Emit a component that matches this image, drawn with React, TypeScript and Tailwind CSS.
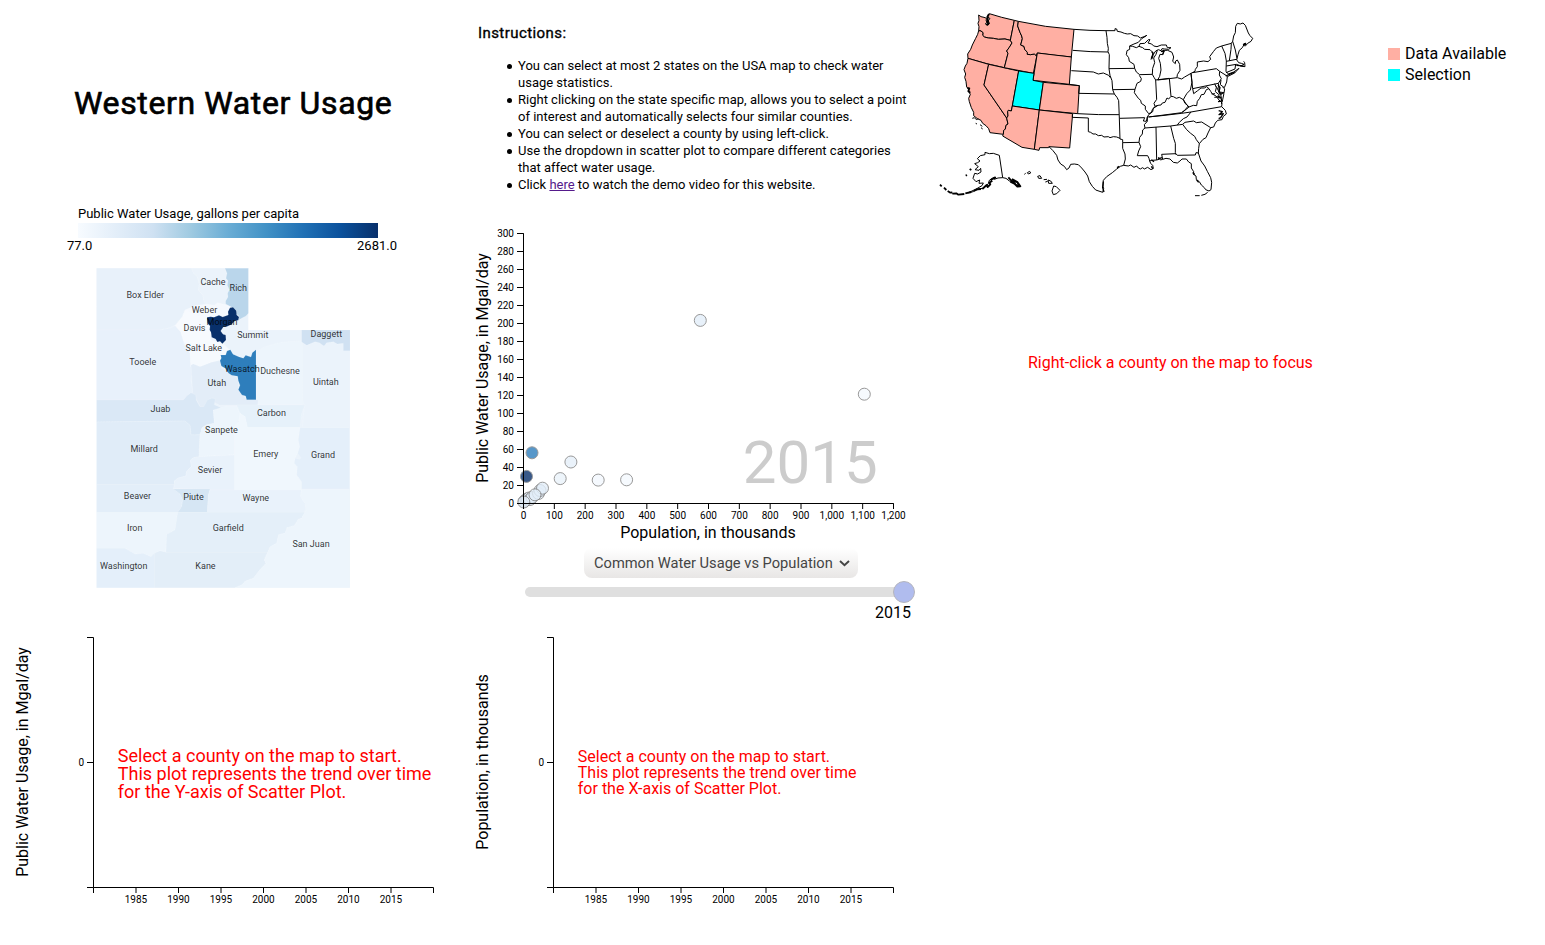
import React from "react";

type County = { name: string; fill: string; d: string };
type Label = { text: string; x: number; y: number };

const WEST_FILL = "#ffafa3";

const westernStates: { name: string; fill: string; d: string }[] = [
  { name: "WA", fill: WEST_FILL, d: "M146 45 153 50 162 52 170 55 168 62 172 66 166 72 174 76 178 70 174 62 180 56 173 50 178 41 Q215 53 253 61L241 121 225 117 205 118 190 115 175 114 163 111 158 106 159 98 153 93 146 92 147 80 144 70 147 62Z" },
  { name: "OR", fill: WEST_FILL, d: "M146 92 153 93 159 98 158 106 163 111 175 114 190 115 205 118 225 117 241 121 246 129 238 142 230 153 234 160 223 203Q165 191 114 175L113 162 122 148 127 135 137 115 143 103Z" },
  { name: "CA", fill: WEST_FILL, d: "M114 175 176 193 162 255 230 354 234 372 228 376 226 387 221 392 220 403 180 398 176 386 168 377 158 370 153 361 142 356 131 347 131 337 124 323 118 305 116 295 121 283 117 276 115 266 110 261 108 244 104 232 107 222 102 209 106 198 111 190Z" },
  { name: "NV", fill: WEST_FILL, d: "M176 193 266 213 247 318 244 333 235 331 233 335 234 348 230 354 162 255Z" },
  { name: "ID", fill: WEST_FILL, d: "M253 61 265 64 263 78 270 97 275 108 277 116 272 135 282 139 284 148 292 157 292 163 302 164 313 162 319 167 322 160 310 220 223 203 234 160 230 153 238 142 246 129 241 121Z" },
  { name: "MT", fill: WEST_FILL, d: "M265 64Q345 82 432 88L424 171Q370 166 322 159L319 167 313 162 302 164 292 163 292 157 284 148 282 139 272 135 277 116 275 108 270 97 263 78Z" },
  { name: "WY", fill: WEST_FILL, d: "M322 159 424 171 418 253 309 241Z" },
  { name: "UT", fill: "#00ffff", d: "M266 213 312 220 309 241 340 247 328 330 247 318Z" },
  { name: "CO", fill: WEST_FILL, d: "M340 247 448 257 443 341 328 330Z" },
  { name: "AZ", fill: WEST_FILL, d: "M247 318 328 330 313 448 276 442 218 408 220 403 221 392 226 387 228 376 234 372 230 354 234 348 233 335 235 331 244 333Z" },
  { name: "NM", fill: WEST_FILL, d: "M328 330 428 341 419 444 357 440 356 443 329 443 327 451 313 448Z" },
];

const plainWest: string[] = [
  "M432 88 Q480 92 528 92",
  "M428 151 Q480 156 534 156",
  "M424 212 490 216 505 222 520 219 536 226 541 233",
  "M418 253 448 257 446 280 553 282",
  "M443 341 Q505 345 567 344",
  "M427 343 427 352 475 354 475 395 482 397 489 402 497 402 505 407 515 406 522 411 535 410 540 413 550 410 560 411 570 415",
  "M357 440 369 452 380 466 384 480 392 492 403 499 410 509 417 504 422 493 433 492 445 494 455 504 465 516 473 528 478 545 487 559 497 570 518 577 521 566 519 559 520 541 530 530 547 518 559 508 571 499 581 496",
  "M145 500 134 491 143 488 150 483 142 476 151 467 165 464 165 457 178 461 190 460 208 466 218 533 228 535 238 543 249 545 259 553 267 560",
  "M145 500 135 509 147 511 152 505 153 516 143 522 134 520 129 535 138 545 149 540 147 550 160 549 156 557 142 565 126 573 115 578",
  "M115 578 130 575 141 567 160 565 175 551 178 541 188 534 195 531 193 538 204 534 218 533",
  "M127 355 133 353 139 359 145 356 M137 370 141 372 M150 374 157 379 M153 383 158 387",
  "M283 523 287 520 M292 518 299 514 302 519 295 522Z",
  "M323 529 330 527 335 535 326 535Z M341 539 351 538 M346 546 353 544 M354 540 362 543 367 550 356 550Z",
  "M371 558 379 560 390 571 380 581 370 584 366 573Z",
];

const heavyCoast: string[] = [
  "M235 532 245 543 262 546 271 559 262 560 253 551 241 545 M246 537 262 546 268 559 259 556",
  "M174 55 171 65 176 70 169 75M177 42 172 51 175 67",
  "M112 264 118 265 115 274 121 278",
  "M157 567 170 555 173 561 181 553 178 548 187 542 M181 540 198 532",
  "M30 554 35 559 M42 563 49 570 M53 573 61 578 67 577 M67 581 79 580 85 584 103 582 M106 580 124 576",
  "M107 527 111 525 M119 507 124 510 M131 573 142 568 153 567",
];

const eastStates: string[] = [
  "M48 92 75 92 75 86 80 87 82 94 93 96 103 100 112 102 122 101 132 107 143 108 151 114 162 110 171 106",
  "M48 92 51 112 52 130 55 145 54 155 58 164 57 206",
  "M57 206 134 205",
  "M168 108 155 116 145 127 132 132 119 138 M119 138 119 148 111 152 109 164 116 173 118 184 132 193 134 205",
  "M119 138 128 139 139 143 147 139 158 143 164 148 180 149 185 154 189 159 186 169 183 179 M147 139 150 131 164 130 175 119 180 119 174 129 185 132 191 138 201 140 214 135 229 135 232 143 243 143 236 148 224 147 216 146 213 152 205 149 197 153 189 165 184 173",
  "M134 205 139 216 149 224 187 223 188 205 194 188 191 174 198 163 202 151",
  "M57 206 60 226 66 242 68 269 135 268 138 259 141 250 152 244 154 236 148 226",
  "M68 269 73 282 81 292 86 302 88 355 164 353 160 363 169 364 172 351 177 343",
  "M135 268 133 278 145 295 152 301 154 310 166 318 166 328 176 341 184 338 187 329 195 319 192 310 200 298 197 240 192 232 187 223",
  "M197 240 238 235 243 289 236 297 231 294 225 307 217 309 213 315 204 316 195 319",
  "M203 240 209 229 213 210 211 190 206 175 210 163 218 164 224 151 233 151 246 157 251 171 248 184 256 191 257 183 262 180 269 193 270 211 262 224 261 233 238 236Z",
  "M262 233 275 237 284 231 303 220 306 247 301 270 291 280 286 288 280 299 268 292 259 295 250 290 243 289",
  "M280 299 285 310 295 318 283 332 275 338 177 351 M177 343 188 335 190 325 204 316",
  "M88 355 90 417 98 419 98 428 147 427 149 412 157 402 158 390 165 384 163 374 172 364 172 351",
  "M98 428 98 445 105 462 106 477 101 496 115 498 122 495 132 502 140 498 145 504 151 507 158 503 163 507 173 502 183 509 190 505 188 496 182 490 179 483 177 475 173 467 142 467 146 453 152 440 147 427",
  "M179 483 185 481 200 480 198 381",
  "M165 384 242 378 278 373",
  "M242 378 251 415 256 430 256 458 258 464 M200 480 207 478 206 472 211 480 218 478 215 463 258 461 262 466 316 465 318 458 325 459",
  "M218 478 228 475 240 477 250 487 262 489 270 483 276 477 289 477 296 486 304 491 304 504 311 515 309 522 318 528 319 539 328 545 334 555 343 563 347 569 357 573 363 569 365 547 362 533 352 514 344 498 333 483 325 459",
  "M315 587 329 587 M334 586 345 583 353 577",
  "M278 373 290 389 302 400 314 409 319 419 328 431 326 445 325 459",
  "M328 431 339 418 348 413 354 399 362 383 371 381 376 369 383 361 396 359 400 349 409 342 406 331 395 320",
  "M278 373 285 367 311 363 319 368 335 366 362 383",
  "M262 375 268 367 280 356 291 351 303 336 M172 351 215 347 275 340 303 336 395 320",
  "M303 220 308 266 385 250 M303 220 315 214 316 208",
  "M308 218 379 206 389 214 388 225 394 236 385 250",
  "M316 208 322 200 322 186 341 183 354 185 362 178 359 170 370 155 379 144 395 138 405 160 409 183 408 214 415 222 431 216 447 205 434 219 412 230 408 226 389 214",
  "M395 138 424 130 423 148 418 182 M409 184 439 178 446 188 454 190 462 193 452 198 439 193 409 198 M437 193 435 207 408 218",
  "M424 130 428 124 436 150 441 176 440 180",
  "M428 124 431 108 436 98 437 79 442 70 451 72 459 69 466 76 475 99 480 107 488 115 483 124 473 130 468 136 464 130 457 143 448 151 444 164 441 176",
  "M452 198 465 200 464 188 461 184",
  "M412 230 410 246 403 263 391 254 393 240",
  "M308 266 311 281 323 272 333 264 343 264 350 260 357 266 362 274",
  "M280 299 290 314 297 321 310 316 320 317 322 304 329 295 334 284 342 283 349 269 357 266",
  "M275 338 290 327 297 321",
  "M362 274 367 282 378 288 387 300 396 309 395 320",
  "M374 251 379 263 376 275 387 284 386 294 394 293 392 283 402 279 404 267 398 261 M385 250 388 276 402 278 M379 259 385 272 391 285 M402 280 398 299 394 312 M365 282 375 281M373 292 389 291",
];

const eastHeavy: string[] = [
  "M384 255 390 263 387 275 395 283 M382 288 392 292 396 303 384 305",
  "M407 228 425 220 434 217 M439 196 451 197 462 199 M386 332 397 335 387 344 400 341 392 353 386 356",
  "M184 479 192 485 M205 477 216 473 M184 499 189 507 M309 516 314 524 M320 540 326 547 M40 545 38 563 42 576 M81 503 88 499",
  "M459 134 467 130 464 139 M185 155 189 159 188 169 185 177 M213 155 222 151 218 164",
];

const counties: County[] = [
  { name: "State", fill: "#ebf3fb", d: "M110 205H565V390H870V1163H110Z" },
  { name: "Box Elder", fill: "#e8f1fa", d: "M110 205H395L401 220 412 230 418 253 415 270 429 286 431 300 440 312 437 320 405 317 385 327 375 330 367 350 345 377 330 384 300 390H110Z" },
  { name: "Cache", fill: "#ebf3fb", d: "M395 205H497L503 240 508 280 497 312 470 322 437 315 431 300 429 286 415 270 418 253 412 230 401 220Z" },
  { name: "Rich", fill: "#bad6eb", d: "M495 205H565V340L558 348 546 354 537 359 537 348 528 341 530 332 515 322 497 312 497 303 504 291 503 280 508 269 502 256 504 242 498 235 501 220Z" },
  { name: "Weber", fill: "#f5f9fe", d: "M375 330 405 317 440 312 462 316 473 308 500 315 515 322 508 345 480 352 440 355 410 345Z" },
  { name: "Davis", fill: "#f7fafe", d: "M345 377 367 350 375 330 410 345 440 355 442 370 450 378 453 400 450 425 400 430 372 428Z" },
  { name: "Tooele", fill: "#e8f1fb", d: "M110 390H300L330 384 345 377 362 396 372 430 390 460 393 490 397 515 393 540 398 577 380 588 370 600H110Z" },
  { name: "Salt Lake", fill: "#f6fafe", d: "M372 430 400 430 450 420 478 425 490 431 507 448 500 462 485 470 480 484 455 487 420 500 400 492 392 500 390 460Z" },
  { name: "Uintah", fill: "#ebf3fb", d: "M725 420H870V683H727L733 615 727 600Z" },
  { name: "Duchesne", fill: "#edf5fc", d: "M588 455 615 440 665 427 727 422V615H588Z" },
  { name: "Daggett", fill: "#d0e1f2", d: "M725 390H870V452L850 452 850 430 832 432 820 425 800 428 792 438 778 428 765 425 740 436 725 426Z" },
  { name: "Utah", fill: "#e3edf8", d: "M393 495 400 492 420 500 455 487 480 481 484 505 520 525 535 535 535 570 560 598 595 600 593 615 478 615 465 608 458 594 445 600 435 620 420 620 405 590 393 583 398 577Z" },
  { name: "Juab", fill: "#dae8f6", d: "M110 600H370L380 588 393 578 407 585 409 601 420 620 431 620 442 600 456 594 466 597 463 614 483 623 470 632 460 630 463 670 440 674 426 683 420 704 393 705 390 676 375 663 110 666Z" },
  { name: "Millard", fill: "#e0ecf8", d: "M110 666 375 663 390 676 393 705 420 704 417 770 400 773 391 781 394 799 380 814 378 828 355 834 344 842 343 853H110Z" },
  { name: "Sanpete", fill: "#edf5fc", d: "M463 670 460 630 483 623 500 618 530 618 538 635 540 655 525 680 523 765 417 770 420 704 426 683 440 674Z" },
  { name: "Carbon", fill: "#e6f1fa", d: "M530 615H735L725 640 720 682H562L555 650 540 640Z" },
  { name: "Emery", fill: "#f0f7fd", d: "M540 640 555 650 562 682H720L715 720 720 745 705 775 703 790 712 800 710 825 725 845 725 870H523L523 680 537 665Z" },
  { name: "Grand", fill: "#e4effa", d: "M720 683H868V867H725L725 845 710 825 712 800 703 790 705 775 720 778 722 772 713 760 719 740 715 720Z" },
  { name: "Sevier", fill: "#e9f2fb", d: "M417 770 523 765 523 870H450L340 865 343 853 344 842 355 834 378 828 380 814 394 799 391 781 400 773Z" },
  { name: "Beaver", fill: "#e3eef9", d: "M110 853H343L340 866 360 882 368 900 365 920 353 937H110Z" },
  { name: "Piute", fill: "#d6e6f4", d: "M340 867H450L445 885 442 937H353L365 920 368 900 360 882Z" },
  { name: "Wayne", fill: "#e9f2fb", d: "M450 870H725L722 890 735 910 738 925 730 938H442L445 885Z" },
  { name: "Iron", fill: "#edf5fc", d: "M110 937H353L348 985 345 990 320 1003 318 1055 300 1052 273 1070 250 1060 225 1062 195 1045H110Z" },
  { name: "Garfield", fill: "#e4eff9", d: "M353 937H735L725 955 715 958 703 977 681 983 675 1000 656 1004 650 1030 630 1041 623 1057H318L320 1003 345 990Z" },
  { name: "Washington", fill: "#e4effa", d: "M110 1045H195L225 1062 250 1060 273 1070 283 1060V1163H110Z" },
  { name: "Kane", fill: "#e3eef8", d: "M283 1060 300 1052 318 1057H623L613 1080 618 1090 595 1115 580 1135 555 1144 547 1154 525 1163H283Z" },
  { name: "San Juan", fill: "#edf5fc", d: "M725 867H868V1163H525L547 1154 555 1144 580 1135 595 1115 618 1090 613 1080 623 1057 630 1041 650 1030 656 1004 675 1000 681 983 703 977 715 958 725 955 738 930 735 910 722 890Z" },
  { name: "Morgan", fill: "#08306b", d: "M441 352 452 350 462 352 477 346 488 351 505 345 504 335 510 323 519 322 529 332 530 345 537 351 535 361 525 362 515 373 503 379 490 381 482 393 489 403 497 405 498 420 487 431 480 424 472 426 467 417 455 412 453 397 449 390 450 378 443 370Z" },
  { name: "Wasatch", fill: "#2e7ebc", d: "M480 482 484 474 482 465 497 465 501 453 511 449 519 463 536 470 550 475 557 466 573 471 577 458 588 449V599H560L557 588 546 585 535 569 540 556 535 542 533 529 515 526 505 519 498 506 484 498Z" },
];

const countyLabels: Label[] = [
  { text: "Cache", x: 213, y: 285 }, { text: "Rich", x: 238.3, y: 291 }, { text: "Box Elder", x: 145.3, y: 298 },
  { text: "Weber", x: 204.5, y: 313 }, { text: "Morgan", x: 222, y: 325 }, { text: "Davis", x: 194.5, y: 331 },
  { text: "Summit", x: 252.8, y: 338 }, { text: "Daggett", x: 326.3, y: 337 }, { text: "Salt Lake", x: 203.8, y: 351 },
  { text: "Tooele", x: 142.8, y: 365 }, { text: "Wasatch", x: 242.2, y: 372 }, { text: "Duchesne", x: 280, y: 374 },
  { text: "Utah", x: 216.8, y: 386 }, { text: "Uintah", x: 325.8, y: 385 }, { text: "Juab", x: 160.5, y: 412 },
  { text: "Carbon", x: 271.5, y: 416 }, { text: "Sanpete", x: 221.5, y: 433 }, { text: "Millard", x: 144.2, y: 452 },
  { text: "Emery", x: 265.8, y: 457 }, { text: "Grand", x: 323, y: 458 }, { text: "Sevier", x: 210, y: 473 },
  { text: "Beaver", x: 137.5, y: 499 }, { text: "Piute", x: 193.5, y: 500 }, { text: "Wayne", x: 255.8, y: 501 },
  { text: "Iron", x: 134.7, y: 531 }, { text: "Garfield", x: 228.3, y: 531 }, { text: "San Juan", x: 311, y: 547 },
  { text: "Washington", x: 123.7, y: 569 }, { text: "Kane", x: 205.5, y: 569 },
];

const dots: { x: number; y: number; fill: string }[] = [
  { x: 700.3, y: 320.4, fill: "#e3eef9" },
  { x: 864.3, y: 394.2, fill: "#f5f9fe" },
  { x: 532, y: 452.8, fill: "#2e7ebc" },
  { x: 526.5, y: 476.4, fill: "#08306b" },
  { x: 570.9, y: 462, fill: "#e6f0fa" },
  { x: 560.2, y: 478.6, fill: "#ebf3fb" },
  { x: 598.2, y: 480.1, fill: "#f3f8fe" },
  { x: 626.6, y: 479.8, fill: "#f5f9fe" },
  { x: 524.5, y: 501, fill: "#e3eef9" }, { x: 526, y: 500, fill: "#e3eef9" },
  { x: 527, y: 499, fill: "#dae8f6" }, { x: 529, y: 498, fill: "#e3eef9" },
  { x: 530, y: 499.5, fill: "#e8f1fa" }, { x: 532, y: 497.5, fill: "#e3eef9" },
  { x: 538.5, y: 493.5, fill: "#e3eef9" }, { x: 540, y: 490.5, fill: "#e3eef9" },
  { x: 542.5, y: 488.2, fill: "#e3eef9" }, { x: 535, y: 494.8, fill: "#e3eef9" },
  { x: 523.8, y: 502, fill: "#e3eef9" },
];

const instructions: React.ReactNode[] = [
  <>You can select at most 2 states on the USA map to check water<br />usage statistics.</>,
  <>Right clicking on the state specific map, allows you to select a point<br />of interest and automatically selects four similar counties.</>,
  <>You can select or deselect a county by using left-click.</>,
  <>Use the dropdown in scatter plot to compare different categories<br />that affect water usage.</>,
  <>Click <a href="#" className="text-[#551a8b] underline">here</a> to watch the demo video for this website.</>,
];

const lineTicks = [1985, 1990, 1995, 2000, 2005, 2010, 2015];

function UsaMap() {
  return (
    <svg className="block h-[200px] w-[345px]" viewBox="920 0 345 200" role="img" aria-label="USA map">
      <g transform="translate(930 0) scale(0.33333)" stroke="#000" strokeWidth="3" strokeLinejoin="round" fill="none">
        {westernStates.map((s) => <path key={s.name} d={s.d} fill={s.fill} />)}
        {plainWest.map((d) => <path key={d} d={d} />)}
        <g strokeWidth="5.5">{heavyCoast.map((d) => <path key={d} d={d} />)}</g>
      </g>
      <g transform="translate(1090 0) scale(0.33333)" stroke="#000" strokeWidth="3" strokeLinejoin="round" fill="none">
        {eastStates.map((d) => <path key={d} d={d} />)}
        <g strokeWidth="4">{eastHeavy.map((d) => <path key={d} d={d} />)}</g>
      </g>
    </svg>
  );
}

function CountyMap() {
  return (
    <svg className="block h-[340px] w-[460px]" viewBox="0 260 460 340" role="img" aria-label="Utah counties">
      <g transform="translate(60 200) scale(0.33333)" stroke="#ffffff" strokeOpacity="0.25" strokeWidth="1.5">
        {counties.map((c) => <path key={c.name} d={c.d} fill={c.fill} />)}
      </g>
      <g fontSize="9" fill="#000" fillOpacity="0.8" textAnchor="middle">
        {countyLabels.map((l) => <text key={l.text} x={l.x} y={l.y}>{l.text}</text>)}
      </g>
    </svg>
  );
}

function ScatterPlot() {
  const ys = Array.from({ length: 16 }, (_, i) => i * 20);
  const xs = Array.from({ length: 13 }, (_, i) => i * 100);
  return (
    <svg className="block h-[345px] w-[460px]" viewBox="460 200 460 345" role="img" aria-label="Scatter plot">
      <text x="810.2" y="483" textAnchor="middle" fontSize="60" fill="#cccccc">2015</text>
      <g>
        {dots.map((p, i) => (
          <circle key={i} cx={p.x} cy={p.y} r="6" fill={p.fill} stroke="#808080" opacity="0.8" />
        ))}
      </g>
      <path d="M517 233.5H523.5V503.5H517" fill="none" stroke="#000" />
      <path d="M523.5 509V503.5H893.5V509" fill="none" stroke="#000" />
      <g fontSize="10">
        {ys.map((v) => {
          const y = 503.5 - v * 0.9;
          return (
            <g key={v}>
              <path d={`M517 ${y}H523.5`} stroke="#000" />
              <text x="514" y={y + 3.5} textAnchor="end">{v}</text>
            </g>
          );
        })}
        {xs.map((v) => {
          const x = 523.5 + (v * 370) / 1200;
          return (
            <g key={v}>
              <path d={`M${x} 503.5V509`} stroke="#000" />
              <text x={x} y="519" textAnchor="middle">{v.toLocaleString("en-US")}</text>
            </g>
          );
        })}
      </g>
      <g fontSize="16" textAnchor="middle">
        <text x="708" y="538">Population, in thousands</text>
        <text transform="translate(488 368) rotate(-90)">Public Water Usage, in Mgal/day</text>
      </g>
    </svg>
  );
}

function TrendPlot({ title, axis, size }: { title: string; axis: string; size: number }) {
  const lines = ["Select a county on the map to start.", "This plot represents the trend over time", `for the ${axis}-axis of Scatter Plot.`];
  return (
    <svg className="block h-[320px] w-[460px]" viewBox="0 625 460 320" role="img" aria-label={title}>
      <path d="M87 637.5H93.5V887.5H87M87 762.5H93.5" fill="none" stroke="#000" />
      <path d="M93.5 893V887.5H433.5V893" fill="none" stroke="#000" />
      <g fontSize="10">
        <text x="84" y="766" textAnchor="end">0</text>
        {lineTicks.map((t, i) => {
          const x = 136 + i * 42.5;
          return (
            <g key={t}>
              <path d={`M${x} 887.5V893`} stroke="#000" />
              <text x={x} y="903" textAnchor="middle">{t}</text>
            </g>
          );
        })}
      </g>
      <text transform="translate(28 762) rotate(-90)" textAnchor="middle" fontSize="16">{title}</text>
      <g fill="#ff0000" fontSize={size}>
        {lines.map((l, i) => <text key={l} x="117.8" y={762 + i * size}>{l}</text>)}
      </g>
    </svg>
  );
}

export default function App() {
  return (
    <main className="grid h-[945px] w-[1545px] grid-cols-[460px_460px_1fr] grid-rows-[200px_425px_320px] overflow-hidden bg-white font-['Roboto',sans-serif] text-black">
      <header className="pt-[79px] pl-[74px]">
        <h1 className="whitespace-nowrap text-[32px] leading-[48px] font-normal tracking-[0.63px] [-webkit-text-stroke:0.65px_black]">Western Water Usage</h1>
      </header>

      <section className="pt-[22px] pl-[18px]">
        <h2 className="text-[15px] leading-[22px] font-normal tracking-[0.42px] [-webkit-text-stroke:0.35px_black]">Instructions:</h2>
        <ul className="mt-[13px] w-[432px] pl-[40px] text-[13px] leading-[17px]">
          {instructions.map((item, i) => (
            <li key={i} className="relative before:absolute before:top-[6.5px] before:-left-[11.5px] before:size-[5px] before:rounded-full before:bg-black">{item}</li>
          ))}
        </ul>
      </section>

      <section className="flex">
        <UsaMap />
        <ul className="flex flex-col gap-[1px] pt-[44px] pl-[123px] text-[16px] leading-[20px]">
          <li className="flex items-center gap-[5px]"><span className="size-3 bg-[#ffafa3]" />Data Available</li>
          <li className="flex items-center gap-[5px]"><span className="size-3 bg-[#00ffff]" />Selection</li>
        </ul>
      </section>

      <section className="flex flex-col">
        <div className="flex h-[60px] flex-col pt-[6px] pl-[67px] text-[13px] leading-[15px]">
          <p className="pl-[11px]">Public Water Usage, gallons per capita</p>
          <div className="mt-[2px] ml-[11px] h-[15px] w-[300px] bg-[linear-gradient(90deg,#f7fbff_0%,#e3eef9_12.5%,#cfe1f2_25%,#9fcae1_37.5%,#6aadd5_50%,#4292c6_62.5%,#2171b5_75%,#0b519c_87.5%,#08306b_100%)]" />
          <div className="flex w-[330px] justify-between"><span>77.0</span><span>2681.0</span></div>
        </div>
        <CountyMap />
      </section>

      <section className="flex flex-col">
        <ScatterPlot />
        <div className="flex h-[33px] items-end pl-[124px]">
          <button className="flex h-[30px] w-[274px] items-center justify-between rounded-[8px] bg-[linear-gradient(180deg,#ffffff,#e8e6e5)] pr-[8.5px] pl-[10px] text-[14.67px] text-[#444]">
            <span className="whitespace-nowrap">Common Water Usage vs Population</span>
            <svg className="h-[7px] w-[11px]" viewBox="0 0 11 7"><path d="M1 1 5.5 5.3 10 1" fill="none" stroke="#444" strokeWidth="1.9" /></svg>
          </button>
        </div>
        <div className="flex h-[25px] items-center justify-end pt-[3px] pl-[65px] pr-[5px]">
          <div className="h-[10px] grow rounded-l-[5px] bg-[#dfdfdf]" />
          <div className="-ml-px size-[22px] shrink-0 rounded-full border border-[#b5b5bd] bg-[#b0bcee]" />
        </div>
        <p className="pr-[9px] text-right text-[16px] leading-[19px]">2015</p>
      </section>

      <section className="pt-[153px] pl-[108px]">
        <p className="text-[16px] leading-[19px] text-[#ff0000]">Right-click a county on the map to focus</p>
      </section>

      <TrendPlot title="Public Water Usage, in Mgal/day" axis="Y" size={18} />
      <TrendPlot title="Population, in thousands" axis="X" size={16} />
    </main>
  );
}
